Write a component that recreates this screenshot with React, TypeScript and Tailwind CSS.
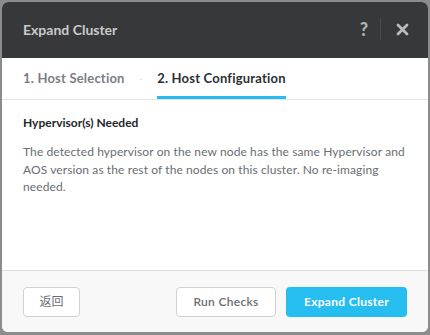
import React from "react";

export default function App() {
  return (
    <div className="w-[430px] h-[335px] bg-[#8c8c8c] p-[2px]" style={{ fontFamily: "Lato, 'Noto Sans CJK SC', sans-serif" }}>
      <div className="w-[426px] h-[330px] flex flex-col rounded-[6px] overflow-hidden bg-white">
        {/* Header */}
        <div className="h-[56px] shrink-0 bg-[#37383a] flex items-center pl-[21px] pr-[19px] pb-[2px]">
          <div className="flex-1 text-[14px] font-bold text-[#c9cacb]">Expand Cluster</div>
          <div className="text-[18px] font-black text-[#b0b1b2] mr-[12px]">?</div>
          <div className="w-px h-[22px] bg-[#4a4b4d] mr-[15px]" />
          <svg width="13" height="13" viewBox="0 0 13 13">
            <path d="M2 2 L11 11 M11 2 L2 11" stroke="#b9babb" strokeWidth="2.8" strokeLinecap="round" />
          </svg>
        </div>

        {/* Tabs */}
        <div className="h-[42px] shrink-0 flex items-end border-b border-[#e2e3e5] pl-[21px]">
          <div className="h-full flex items-center text-[13px] font-bold text-[#7a7e85] tracking-[0.2px]">1. Host Selection</div>
          <div className="h-full flex items-center mx-[15px] text-[#d0d0d0] text-[10px]">·</div>
          <div className="h-full flex items-center text-[13px] font-bold text-[#2c2f33] border-b-[3px] border-[#26bbee] pt-[3px] tracking-[0.2px]">
            2. Host Configuration
          </div>
        </div>

        {/* Body */}
        <div className="flex-1 px-[21px] pt-[14px]">
          <div className="text-[12px] font-bold text-[#23262a]">Hypervisor(s) Needed</div>
          <p className="mt-[11px] text-[12px] leading-[17.5px] text-[#6a6d72] tracking-[0.1px]">
            The detected hypervisor on the new node has the same Hypervisor and AOS version as the rest of the nodes on this cluster. No re-imaging needed.
          </p>
        </div>

        {/* Footer */}
        <div className="h-[62px] shrink-0 bg-[#f8f8f8] border-t border-[#dcdde0] flex items-center px-[21px]">
          <button className="h-[30px] w-[57px] rounded-[4px] border border-[#cfd1d4] bg-white text-[12px] text-[#6a6d72]">返回</button>
          <div className="flex-1" />
          <button className="h-[30px] w-[100px] rounded-[4px] border border-[#cfd1d4] bg-white text-[12px] font-semibold text-[#6a6d72] tracking-[0.3px]">Run Checks</button>
          <button className="ml-[10px] h-[30px] w-[121px] rounded-[4px] bg-[#26bdf0] text-[12px] font-bold text-white tracking-[0.3px]">Expand Cluster</button>
        </div>
      </div>
    </div>
  );
}
